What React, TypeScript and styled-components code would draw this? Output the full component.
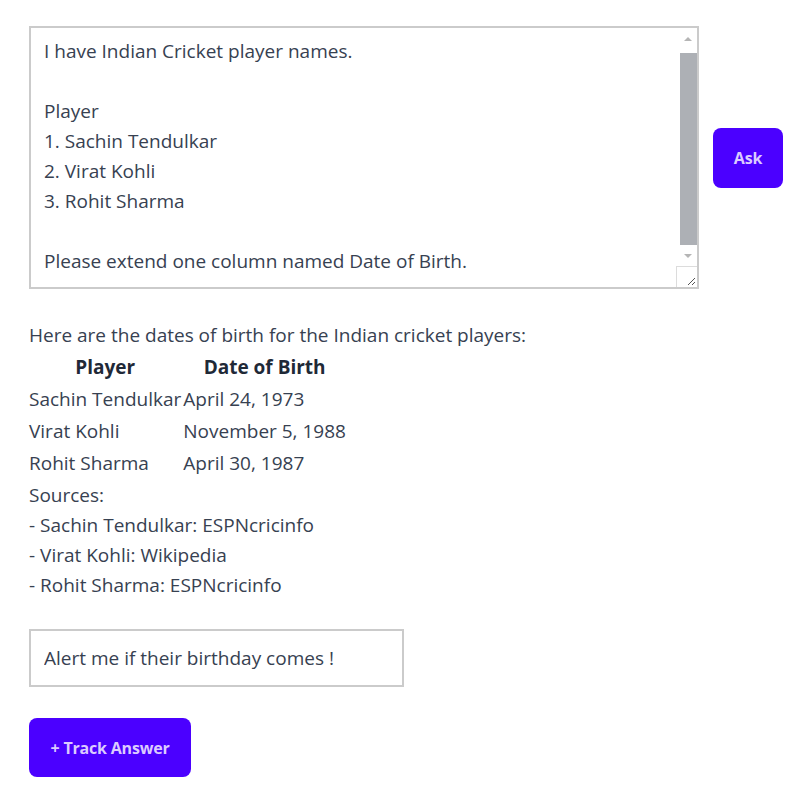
import React from "react";
import styled, { createGlobalStyle } from "styled-components";

const Global = createGlobalStyle`
  html, body { margin: 0; padding: 0; background: #ffffff; }
  body { font-family: "Open Sans", "Noto Sans", sans-serif; color: #374151; }
`;

const Page = styled.div`
  padding: 26px 29px;
  display: flex;
  flex-direction: column;
  align-items: flex-start;
`;

const AskRow = styled.div`
  display: flex;
  align-items: center;
  gap: 14px;
`;

const PromptFrame = styled.div`
  position: relative;
  width: 670px;
  height: 263px;
`;

const Prompt = styled.textarea`
  box-sizing: border-box;
  display: block;
  width: 100%;
  height: 100%;
  border: 2px solid #cbcbcb;
  padding: 8px 30px 8px 13px;
  font-family: "Open Sans", "Noto Sans", sans-serif;
  font-size: 19px;
  line-height: 30px;
  color: #374151;
  overflow: hidden;
  resize: none;
  outline: none;
  background: #fff;
`;

const ScrollBar = styled.div`
  position: absolute;
  top: 2px;
  right: 2px;
  width: 19px;
  height: 238px;
  display: flex;
  flex-direction: column;
  align-items: center;
  pointer-events: none;
`;

const Arrow = styled.div<{ $down?: boolean }>`
  height: 21px;
  width: 100%;
  display: flex;
  align-items: center;
  justify-content: center;
  &::before {
    content: "";
    width: 0;
    height: 0;
    border-left: 4px solid transparent;
    border-right: 4px solid transparent;
    ${(p) =>
      p.$down
        ? "border-top: 4px solid #b5b5b5;"
        : "border-bottom: 4px solid #b5b5b5;"}
  }
`;

const Thumb = styled.div`
  width: 17px;
  height: 192px;
  margin-left: 2px;
  background: #adb0b5;
  flex: none;
`;

const Track = styled.div`
  flex: 1;
  width: 100%;
  display: flex;
  flex-direction: column;
  padding-top: 4px;
`;

const Grip = styled.div`
  position: absolute;
  right: 2px;
  bottom: 2px;
  width: 20px;
  height: 20px;
  border-left: 1px solid #dcdcdc;
  border-top: 1px solid #dcdcdc;
  background: #fff;
  pointer-events: none;
  display: flex;
  align-items: flex-end;
  justify-content: flex-end;
`;

const PrimaryButton = styled.button<{ $w: number; $h: number }>`
  box-sizing: border-box;
  width: ${(p) => p.$w}px;
  height: ${(p) => p.$h}px;
  border: none;
  border-radius: 8px;
  background: #4b00ff;
  color: #dccbff;
  font-family: "Open Sans", "Noto Sans", sans-serif;
  font-weight: 700;
  font-size: 16px;
  letter-spacing: -0.2px;
  cursor: pointer;
  padding: 0;
`;

const Answer = styled.div`
  margin-top: 31px;
  font-size: 19px;
  line-height: 30px;
  color: #374151;
`;

const Line = styled.div``;

const BirthTable = styled.table`
  margin-left: -2px;
  border-spacing: 2px;
  font-size: 19px;
  line-height: 30px;
  color: #374151;
`;

const Th = styled.th`
  padding: 0;
  font-weight: 700;
  color: #1f2937;
  text-align: center;
`;

const Td = styled.td`
  padding: 0;
  text-align: left;
  white-space: nowrap;
`;

const AlertBox = styled.input`
  box-sizing: border-box;
  margin-top: 29px;
  width: 375px;
  height: 58px;
  border: 2px solid #cbcbcb;
  padding: 0 13px;
  font-family: "Open Sans", "Noto Sans", sans-serif;
  font-size: 19px;
  color: #374151;
  outline: none;
`;

const TrackWrap = styled.div`
  margin-top: 31px;
`;

const promptText =
  "I have Indian Cricket player names.\n\nPlayer\n1. Sachin Tendulkar\n2. Virat Kohli\n3. Rohit Sharma\n\nPlease extend one column named Date of Birth.\n";

const rows = [
  ["Sachin Tendulkar", "April 24, 1973"],
  ["Virat Kohli", "November 5, 1988"],
  ["Rohit Sharma", "April 30, 1987"],
];

const sources = [
  "- Sachin Tendulkar: ESPNcricinfo",
  "- Virat Kohli: Wikipedia",
  "- Rohit Sharma: ESPNcricinfo",
];

export default function App() {
  return (
    <>
      <Global />
      <Page>
        <AskRow>
          <PromptFrame>
            <Prompt defaultValue={promptText} />
            <ScrollBar>
              <Arrow />
              <Track>
                <Thumb />
              </Track>
              <Arrow $down />
            </ScrollBar>
            <Grip>
              <svg width="12" height="12" viewBox="0 0 12 12">
                <path d="M3 10 L10 3 M7 10 L10 7" stroke="#555" strokeWidth="1" fill="none" />
              </svg>
            </Grip>
          </PromptFrame>
          <PrimaryButton $w={70} $h={60}>Ask</PrimaryButton>
        </AskRow>
        <Answer>
          <Line>Here are the dates of birth for the Indian cricket players:</Line>
          <BirthTable>
            <thead>
              <tr>
                <Th>Player</Th>
                <Th>Date of Birth</Th>
              </tr>
            </thead>
            <tbody>
              {rows.map(([n, d]) => (
                <tr key={n}>
                  <Td>{n}</Td>
                  <Td>{d}</Td>
                </tr>
              ))}
            </tbody>
          </BirthTable>
          <Line>Sources:</Line>
          {sources.map((s) => (
            <Line key={s}>{s}</Line>
          ))}
        </Answer>
        <AlertBox defaultValue="Alert me if their birthday comes !" />
        <TrackWrap>
          <PrimaryButton $w={162} $h={59}>+ Track Answer</PrimaryButton>
        </TrackWrap>
      </Page>
    </>
  );
}
